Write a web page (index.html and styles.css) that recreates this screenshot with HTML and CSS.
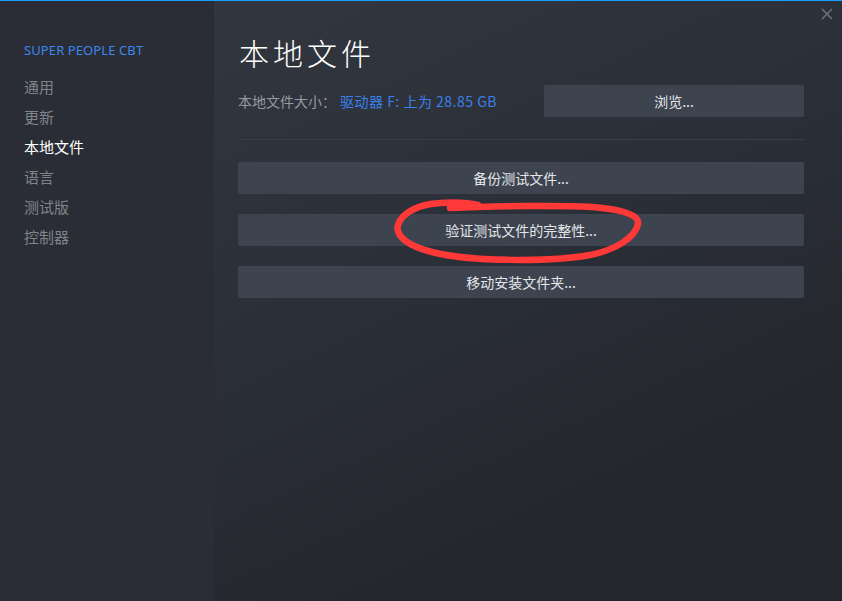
FILE: index.html
```html
<!DOCTYPE html>
<html lang="zh-CN">
<head>
<meta charset="utf-8">
<title>本地文件</title>
<link rel="stylesheet" href="styles.css">
</head>
<body>
<div class="window">
  <aside class="sidebar">
    <div class="game-title">SUPER PEOPLE CBT</div>
    <nav class="nav">
      <div class="nav-item">通用</div>
      <div class="nav-item">更新</div>
      <div class="nav-item active">本地文件</div>
      <div class="nav-item">语言</div>
      <div class="nav-item">测试版</div>
      <div class="nav-item">控制器</div>
    </nav>
  </aside>
  <main class="content">
    <h1 class="title">本地文件</h1>
    <div class="size-row">
      <div class="size-text">本地文件大小：<span class="size-val">驱动器 F: 上为 28.85 GB</span></div>
      <button class="btn browse">浏览...</button>
    </div>
    <div class="sep"></div>
    <div class="actions">
      <button class="btn">备份测试文件...</button>
      <button class="btn">验证测试文件的完整性...</button>
      <button class="btn">移动安装文件夹...</button>
    </div>
  </main>
  <button class="close" aria-label="关闭">
    <svg width="12" height="12" viewBox="0 0 12 12"><path d="M1 1 L11 11 M11 1 L1 11" stroke="#6c7680" stroke-width="1.5" fill="none"/></svg>
  </button>
  <svg class="annotation" width="842" height="601" viewBox="0 0 842 601">
    <path d="M450 208 C 490 206, 560 205, 592 207 C 618 209, 640 214, 638 224 C 635 238, 615 250, 590 255 C 550 262, 470 262, 432 252 C 408 246, 395 236, 398 225 C 402 212, 420 204, 440 203 C 455 202, 470 203, 478 205" fill="none" stroke="#ff3838" stroke-width="6.5" stroke-linecap="round" stroke-linejoin="round"/>
  </svg>
</div>
</body>
</html>
```

FILE: styles.css
```css
html, body {
  margin: 0;
  padding: 0;
  height: 100%;
  overflow: hidden;
}
body {
  background: #23262d;
  border-top: 1px solid #1a9fff;
  font-family: "Noto Sans", "Noto Sans CJK SC", sans-serif;
}
.window {
  position: relative;
  display: flex;
  height: 600px;
}
.sidebar {
  width: 214px;
  flex: none;
  background: #2a2d35;
  padding: 41px 0 0 24px;
  box-sizing: border-box;
}
.game-title {
  color: #3a87ef;
  font-size: 13px;
  line-height: 16px;
  letter-spacing: 0.1px;
}
.nav {
  margin-top: 14px;
  display: flex;
  flex-direction: column;
}
.nav-item {
  font-family: "Noto Sans CJK SC", sans-serif;
  font-size: 15px;
  line-height: 30px;
  color: #80848b;
}
.nav-item.active {
  color: #ffffff;
}
.content {
  flex: 1;
  padding: 33px 38px 0 24px;
  background: linear-gradient(155deg, #32363f 0%, #2b2f37 40%, #24272e 75%, #23262d 100%);
  display: flex;
  flex-direction: column;
}
.title {
  margin: 0;
  padding-left: 1px;
  font-family: "Noto Sans CJK SC", sans-serif;
  font-weight: 300;
  font-size: 30px;
  line-height: 36px;
  letter-spacing: 4px;
  color: #ffffff;
}
.size-row {
  margin-top: 15px;
  height: 32px;
  display: flex;
  align-items: center;
  justify-content: space-between;
}
.size-text {
  font-family: "Noto Sans CJK SC", sans-serif;
  font-size: 14px;
  color: #959aa1;
}
.size-val {
  color: #3b80ec;
  margin-left: 4px;
  letter-spacing: 0.5px;
}
.btn {
  font-family: "Noto Sans CJK SC", sans-serif;
  font-size: 14px;
  color: #e3e5e8;
  background: #3d4450;
  border: none;
  border-radius: 2px;
  height: 32px;
  padding: 0;
  cursor: pointer;
}
.browse {
  width: 260px;
}
.sep {
  margin-top: 22px;
  height: 1px;
  background: #393d45;
}
.actions {
  margin-top: 22px;
  display: flex;
  flex-direction: column;
  gap: 20px;
}
.close {
  position: absolute;
  top: 6px;
  right: 8px;
  width: 14px;
  height: 14px;
  padding: 0;
  border: none;
  background: transparent;
  display: flex;
  align-items: center;
  justify-content: center;
}
.annotation {
  position: absolute;
  left: 0;
  top: -1px;
  pointer-events: none;
}
```
